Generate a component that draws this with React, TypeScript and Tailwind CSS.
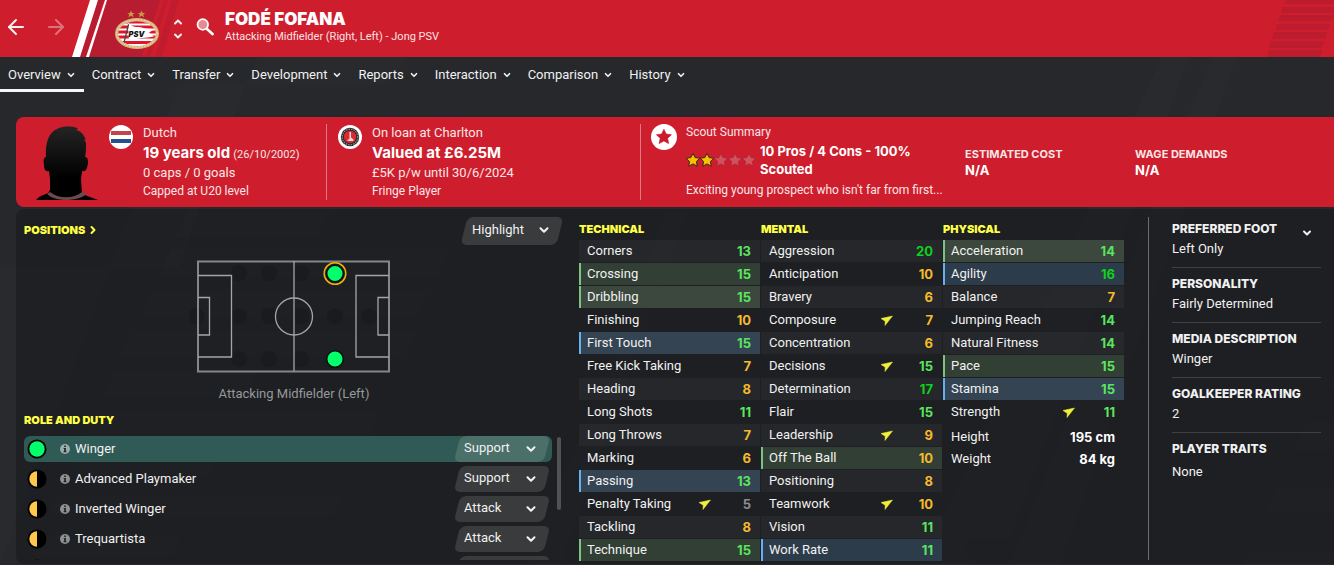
import { useState } from "react";
import { ArrowLeft, ArrowRight, ChevronDown, ChevronUp } from "lucide-react";

type Mark = "green" | "blue" | undefined;
type Attribute = { name: string; value: number; mark?: Mark; rising?: boolean };

const NAV = ["Overview", "Contract", "Transfer", "Development", "Reports", "Interaction", "Comparison", "History"];

const TECHNICAL: Attribute[] = [
  { name: "Corners", value: 13 },
  { name: "Crossing", value: 15, mark: "green" },
  { name: "Dribbling", value: 15, mark: "green" },
  { name: "Finishing", value: 10 },
  { name: "First Touch", value: 15, mark: "blue" },
  { name: "Free Kick Taking", value: 7 },
  { name: "Heading", value: 8 },
  { name: "Long Shots", value: 11 },
  { name: "Long Throws", value: 7 },
  { name: "Marking", value: 6 },
  { name: "Passing", value: 13, mark: "blue" },
  { name: "Penalty Taking", value: 5, rising: true },
  { name: "Tackling", value: 8 },
  { name: "Technique", value: 15, mark: "green" },
];

const MENTAL: Attribute[] = [
  { name: "Aggression", value: 20 },
  { name: "Anticipation", value: 10 },
  { name: "Bravery", value: 6 },
  { name: "Composure", value: 7, rising: true },
  { name: "Concentration", value: 6 },
  { name: "Decisions", value: 15, rising: true },
  { name: "Determination", value: 17 },
  { name: "Flair", value: 15 },
  { name: "Leadership", value: 9, rising: true },
  { name: "Off The Ball", value: 10, mark: "green" },
  { name: "Positioning", value: 8 },
  { name: "Teamwork", value: 10, rising: true },
  { name: "Vision", value: 11 },
  { name: "Work Rate", value: 11, mark: "blue" },
];

const PHYSICAL: Attribute[] = [
  { name: "Acceleration", value: 14, mark: "green" },
  { name: "Agility", value: 16, mark: "blue" },
  { name: "Balance", value: 7 },
  { name: "Jumping Reach", value: 14 },
  { name: "Natural Fitness", value: 14 },
  { name: "Pace", value: 15, mark: "green" },
  { name: "Stamina", value: 15, mark: "blue" },
  { name: "Strength", value: 11, rising: true },
];

const ROLES = [
  { name: "Winger", duty: "Support", full: true },
  { name: "Advanced Playmaker", duty: "Support", full: false },
  { name: "Inverted Winger", duty: "Attack", full: false },
  { name: "Trequartista", duty: "Attack", full: false },
];

const PROFILE = [
  { label: "Preferred Foot", value: "Left Only" },
  { label: "Personality", value: "Fairly Determined" },
  { label: "Media Description", value: "Winger" },
  { label: "Goalkeeper Rating", value: "2" },
];

function valueColor(value: number) {
  if (value >= 16) return "text-[#0fd11c]";
  if (value >= 11) return "text-[#5ae65f]";
  if (value >= 6) return "text-[#f7b92d]";
  return "text-[#8d8e90]";
}

function rowColor(index: number, mark: Mark) {
  const light = index % 2 === 0;
  if (mark === "green") return light ? "bg-[#3c483d]" : "bg-[#313f34]";
  if (mark === "blue") return light ? "bg-[#354453]" : "bg-[#2d3c4b]";
  return light ? "bg-white/4" : "";
}

function edge(mark: Mark) {
  if (mark === "green") return "shadow-[inset_2px_0_0_#7cc47f]";
  if (mark === "blue") return "shadow-[inset_2px_0_0_#64b0f2]";
  return "";
}

function Backdrop() {
  return (
    <svg className="absolute inset-0 h-full w-full" viewBox="0 0 1334 565" preserveAspectRatio="none" aria-hidden="true">
      <g fill="#fff" fillOpacity="0.012">
        <path d="M258 57H408L390 84H246L178 268H0V565H0L178 84H246Z" />
        <path d="M188 210H330L318 237H176ZM170 249H450L438 277H160ZM150 290H430L418 317H140ZM132 331H416L404 356H121ZM113 372H255L246 395H104ZM94 413H380L368 442H84ZM76 455H216L208 475H70ZM57 495H342L334 515H50ZM40 535H180L174 555H33Z" />
        <path d="M1162 57H1189L1010 538H962L972 565H920ZM1212 57H1237L1060 565H1010ZM668 210H688L560 565H530Z" />
        <path d="M1334 380L1322 387H1334ZM1307 422H1334V450H1295ZM1278 487H1334V513H1266ZM1248 552H1334V565H1243Z" />
      </g>
    </svg>
  );
}

function HeaderArt() {
  return (
    <>
      <svg className="absolute left-0 top-0 h-full w-[200px]" viewBox="0 0 200 57" aria-hidden="true">
        <path d="M108 0H160L142 57H88Z" fill="#b81c31" />
        <path d="M164 0H168L150 57H145ZM172 0H179L162 57H155Z" fill="#b81c31" fillOpacity=".65" />
        <path d="M98 0H104L86 57H80Z" fill="#b81c31" />
        <path d="M90 0H98L80 57H72ZM105 0H107L89 57H86Z" fill="#fff" />
      </svg>
      <svg className="absolute right-0 top-0 h-full w-[70px]" viewBox="0 0 70 57" aria-hidden="true">
        <path
          d="M22 0H70V4H20ZM19 7H70V13H17ZM16 15H70L67 21H14ZM13 24H66L64 30H11ZM10 32H63L61 39H8ZM7 41H60L58 48H5ZM5 50H58L56 57H3Z"
          fill="#bd1b2e"
        />
      </svg>
    </>
  );
}

function ClubBadge() {
  return (
    <svg className="mt-1 h-[42px] w-[46px]" viewBox="1 0 46 42" role="img" aria-label="PSV">
      <path d="M18 .5l1.100 2.400h2.700l-2.100 1.700.9 2.700L18 5.800l-2.600 1.500.9-2.700-2.100-1.700h2.700ZM28.500 .5l1.100 2.400h2.700l-2.100 1.700.9 2.700-2.600-1.500-2.600 1.500.9-2.700-2.100-1.700h2.700Z" fill="#c79a45" />
      <ellipse cx="24" cy="23.500" rx="22" ry="15.500" fill="#d5b878" />
      <ellipse cx="24" cy="23.500" rx="20.200" ry="13.700" fill="none" stroke="#eee0c4" strokeWidth="1" strokeDasharray="1.500 1.500" />
      <ellipse cx="24" cy="23.500" rx="18.800" ry="12.300" fill="#fff" />
      <clipPath id="badge"><ellipse cx="24" cy="23.500" rx="18.800" ry="12.300" /></clipPath>
      <g clipPath="url(#badge)" fill="#e0142b">
        <path d="M5 10.500h38v3H5ZM5 15.500h38v3H5ZM5 20.500h38v3H5ZM5 25.500h38v3H5ZM5 31h38v3H5Z" />
        <path d="M15 13q5 4.500 9 4t8 1.500l9 1-5 3 5 4q-7 1-12 1.500t-13 3Z" fill="#fff" />
        <path d="M15 14l1.200.5-4.500 18-1.200-.5Z" fill="#444" />
      </g>
      <text x="15.500" y="26.500" fontSize="7.500" fontWeight="900" fontStyle="italic" fontFamily="Inter, sans-serif" fill="#111">PSV</text>
    </svg>
  );
}

function Portrait() {
  return (
    <svg className="h-[74px] w-16 shrink-0" viewBox="0 0 64 74" role="img" aria-label="Player portrait">
      <defs>
        <linearGradient id="skin" x1="0" y1="0" x2="0" y2="1">
          <stop offset="0" stopColor="#242424" />
          <stop offset=".7" stopColor="#000" />
        </linearGradient>
      </defs>
      <path
        d="M10 31C9 16 13 6 22 2.500C28 0 35 0 41 2L42 3L40 4C45 5 48 9 50 14L48 13L50 17C50 22 50 27 49 31C52 31 52 34 52 37C51 43 50 46 46 45L45 53L46 68L62 74H0C3 70 8 69 12 67L14 64L14 53L13 45C9 46 8 43 8 38C7 34 8 31 10 31Z"
        fill="url(#skin)"
      />
      <path d="M11 68L14 66C22 73 38 73 46 66L51 68L46 71C37 75 23 75 15 71Z" fill="#6e4a4c" />
    </svg>
  );
}

function FlagIcon() {
  return (
    <svg className="size-6 shrink-0" viewBox="0 0 24 24" role="img" aria-label="Netherlands">
      <circle cx="12" cy="12" r="12" fill="#fff" />
      <path d="M2 6h20v4H2Z" fill="#c2454d" />
      <path d="M2 14h20v4H2Z" fill="#25508f" />
    </svg>
  );
}

function CharltonIcon() {
  return (
    <svg className="size-6 shrink-0" viewBox="0 0 24 24" role="img" aria-label="Charlton">
      <circle cx="12" cy="12" r="12" fill="#fff" />
      <circle cx="12" cy="12" r="9.200" fill="#2a2a2a" />
      <circle cx="12" cy="12" r="7.800" fill="none" stroke="#8d8d8d" strokeWidth="1.200" strokeDasharray="1.500 1" />
      <circle cx="12" cy="12" r="6.200" fill="#e02632" />
      <path d="M11.500 7h1.500v5.500l2.500 2V16h-5l-1.500-1 2.500-1Z" fill="#f6dada" />
    </svg>
  );
}

const STAR = "M7 .3l2.100 4.300 4.700.6-3.400 3.300.9 4.700L7 10.900 2.700 13.200l.9-4.700L.2 5.200l4.700-.6Z";

function Stars() {
  return (
    <svg className="h-3.5 w-[70px] shrink-0" viewBox="0 0 70 14" role="img" aria-label="2 out of 5 stars">
      {[0, 1, 2, 3, 4].map((i) => (
        <path
          key={i}
          d={STAR}
          transform={`translate(${i * 14} 0)`}
          fill={i < 2 ? "#f6c100" : "#d4505c"}
          stroke={i < 2 ? "#3a2a1a" : "#b0283a"}
          strokeWidth="1"
          strokeLinejoin="round"
        />
      ))}
    </svg>
  );
}

function Pitch() {
  const faint = [
    [43, 13], [73, 13], [105, 13], [0, 56], [43, 56], [73, 56], [105, 56],
    [139, 56], [173, 56], [43, 99], [73, 99], [105, 99],
  ];
  return (
    <svg className="h-[113px] w-[210px]" viewBox="-7 0 210 113" role="img" aria-label="Pitch positions">
      <g fill="#18191c" fillOpacity=".6">
        {faint.map(([x, y]) => <circle key={`${x}-${y}`} cx={x} cy={y} r="8" />)}
      </g>
      <g fill="none" stroke="#a4a5a6">
        <path d="M2 1.500H193V111.500H2Z" stroke="#858687" strokeWidth="2" />
        <path d="M98 1V111M2 15.500H35.500V97H2M2 37.500H13.500V75H2M193 15.500H160V97H193M193 37.500H182V75H193" strokeWidth="1.300" />
        <circle cx="98" cy="56.500" r="18.500" strokeWidth="1.300" />
      </g>
      <circle cx="139" cy="13.500" r="10.800" fill="#1d1e22" stroke="#ecb10e" strokeWidth="1.500" />
      <circle cx="139" cy="13.500" r="8.300" fill="#04ff6d" stroke="#06120b" strokeWidth="1.500" />
      <circle cx="139" cy="99" r="8.300" fill="#04ff6d" stroke="#06120b" strokeWidth="1.500" />
    </svg>
  );
}

function RoleDot({ full }: { full: boolean }) {
  return (
    <svg className="size-5 shrink-0" viewBox="0 0 20 20" aria-hidden="true">
      <circle cx="10" cy="10" r="9.500" fill="#000" />
      {full ? <circle cx="10" cy="10" r="7.700" fill="#04ff6d" /> : <path d="M10 2.300V17.700A7.700 7.700 0 0 1 10 2.300Z" fill="#ffc84d" />}
    </svg>
  );
}

function InfoIcon() {
  return (
    <svg className="size-2.5 shrink-0" viewBox="0 0 10 10" aria-hidden="true">
      <circle cx="5" cy="5" r="5" fill="#fff" fillOpacity=".5" />
      <path d="M4.200 1.500h1.700v1.400H4.200ZM3.700 4h2.200v3.300h.6v1h-3v-1h.7V5h-.5Z" fill="#222" />
    </svg>
  );
}

function AttributeTable({ title, rows }: { title: string; rows: Attribute[] }) {
  return (
    <table className="w-full table-fixed border-separate border-spacing-0 text-[13px] leading-5">
      <caption className="pt-3 pb-[3px] text-left font-['Inter'] text-[11px] leading-4 font-black text-[#ffff45] uppercase">
        {title}
      </caption>
      <tbody>
        {rows.map((row, i) => (
          <tr key={row.name} className="h-[23px]">
            <th
              scope="row"
              className={`w-[116px] border-b border-transparent bg-clip-padding py-0 pl-2 text-left font-normal whitespace-nowrap ${rowColor(i, row.mark)} ${edge(row.mark)}`}
            >
              {row.name}
            </th>
            <td className={`border-b border-transparent bg-clip-padding p-0 ${rowColor(i, row.mark)}`}>
              <div className="flex items-center justify-between pr-[9px]">
                <svg className="ml-1 size-3" viewBox="0 0 12 12" aria-hidden="true">
                  {row.rising && <path d="M0 4.500L11.500 2L4 11.500L4.200 7.300Z" fill="#f2ef3c" stroke="#f2ef3c" strokeWidth=".5" />}
                </svg>
                <span className={`font-['Inter'] font-bold ${valueColor(row.value)}`}>{row.value}</span>
              </div>
            </td>
          </tr>
        ))}
      </tbody>
    </table>
  );
}

function RoleRow({ role, active }: { role: (typeof ROLES)[number]; active: boolean }) {
  const [duty, setDuty] = useState(role.duty);
  return (
    <li className={`flex h-[26px] shrink-0 items-center rounded-md pl-[3px] ${active ? "bg-[#2f5a56]" : ""}`}>
      <RoleDot full={role.full} />
      <span className="ml-[13px] flex flex-1 items-center gap-[5px]">
        <InfoIcon />
        {role.name}
      </span>
      <div className="relative mr-0.5 h-[26px] w-24">
        <div className={`absolute inset-x-[3px] inset-y-0 -skew-x-[14deg] rounded-md ${active ? "bg-[#4b6f69]" : "bg-[#3a3b3d]"}`} />
        <select
          aria-label={`${role.name} duty`}
          value={duty}
          onChange={(e) => setDuty(e.target.value)}
          className="relative h-6 w-full appearance-none bg-transparent pr-6 pl-2.5 text-[13px] text-[#f1f1f1]"
        >
          <option>Support</option>
          <option>Attack</option>
        </select>
        <ChevronDown className="pointer-events-none absolute top-1.5 right-3 size-3.5" strokeWidth={3.5} aria-hidden="true" />
      </div>
    </li>
  );
}

export default function App() {
  return (
    <div className="relative flex min-h-screen flex-col overflow-hidden bg-[#26282c] font-['Roboto',sans-serif] text-[13px] leading-5 text-[#f1f1f1]">
      <Backdrop />

      <header className="relative flex h-[57px] items-center bg-[#ce1d2c]">
        <HeaderArt />
        <div className="relative flex w-[114px] items-center gap-4 pb-1 pl-1">
          <button type="button" aria-label="Back"><ArrowLeft className="size-6" strokeWidth={2} /></button>
          <button type="button" aria-label="Forward" className="opacity-40"><ArrowRight className="size-6" strokeWidth={2} /></button>
        </div>
        <div className="relative flex items-center">
          <ClubBadge />
          <div className="ml-3 flex flex-col gap-0.5">
            <button type="button" aria-label="Previous player"><ChevronUp className="size-3" strokeWidth={4} /></button>
            <button type="button" aria-label="Next player"><ChevronDown className="size-3" strokeWidth={4} /></button>
          </div>
          <button type="button" aria-label="Search" className="mb-1 ml-3">
            <svg className="size-[18px]" viewBox="0 0 18 18" aria-hidden="true">
              <circle cx="6.800" cy="6.500" r="5.300" fill="#e88a94" stroke="#fff" strokeWidth="1.700" />
              <path d="M11 11l5.500 5" stroke="#fff" strokeWidth="2.700" strokeLinecap="round" />
            </svg>
          </button>
          <div className="mb-1 ml-[11px]">
            <h1 className="font-['Inter'] text-[17px] leading-5 font-black text-white">FODÉ FOFANA</h1>
            <p className="text-[11px] leading-4 text-[#fbe3e4]">Attacking Midfielder (Right, Left) - Jong PSV</p>
          </div>
        </div>
      </header>

      <nav className="relative mb-[25px] flex h-[35px]" aria-label="Player sections">
        {NAV.map((item, i) => (
          <a
            key={item}
            href={`#${item.toLowerCase()}`}
            className={`flex items-center gap-[5px] border-b-[3px] px-2 pt-1 ${i === 0 ? "border-[#f6f6f6]" : "border-transparent"}`}
          >
            {item}
            <ChevronDown className="size-2.5" strokeWidth={4} aria-hidden="true" />
          </a>
        ))}
      </nav>

      <section
        aria-label="Player summary"
        className="relative ml-4 grid h-[90px] grid-cols-[311fr_314fr_324fr_170fr_199fr] rounded-l-lg bg-[#ce1d2c] text-[#fbe6e7]"
      >
        <div className="my-[7px] flex border-r border-[#e07a82] pl-5">
          <div className="mt-0.5"><Portrait /></div>
          <div className="mt-px mr-2.5 ml-[9px]"><FlagIcon /></div>
          <div className="-mt-px">
            <p>Dutch</p>
            <p className="h-5">
              <b className="font-['Inter'] text-[15px] text-white">19 years old</b> <span className="text-[11px]">(26/10/2002)</span>
            </p>
            <p>0 caps / 0 goals</p>
            <p className="text-xs leading-4">Capped at U20 level</p>
          </div>
        </div>
        <div className="my-[7px] flex border-r border-[#e07a82] pl-[11px]">
          <div className="mt-px mr-2.5"><CharltonIcon /></div>
          <div className="-mt-px">
            <p>On loan at Charlton</p>
            <p className="font-['Inter'] text-[15px] font-bold text-white">Valued at £6.25M</p>
            <p>£5K p/w until 30/6/2024</p>
            <p className="text-xs leading-4">Fringe Player</p>
          </div>
        </div>
        <div className="my-[7px] flex pl-2.5">
          <svg className="size-[26px] shrink-0" viewBox="0 0 26 26" aria-hidden="true">
            <circle cx="13" cy="13" r="13" fill="#fff" />
            <path d={STAR} transform="translate(5.200 5) scale(1.100)" fill="#cb1c2c" stroke="#cb1c2c" strokeWidth=".6" strokeLinejoin="round" />
          </svg>
          <div className="ml-[9px]">
            <p className="text-xs leading-4">Scout Summary</p>
            <div className="flex items-center gap-1 pt-0.5">
              <Stars />
              <p className="w-[160px] font-['Inter'] text-[13px] leading-[18px] font-bold text-white">10 Pros / 4 Cons - 100% Scouted</p>
            </div>
            <p className="pt-1 text-xs leading-4">Exciting young prospect who isn't far from first...</p>
          </div>
        </div>
        <div className="self-center">
          <p className="font-['Inter'] text-[11px] leading-4 font-bold uppercase">Estimated Cost</p>
          <p className="font-['Inter'] text-[13px] leading-4 font-bold text-white">N/A</p>
        </div>
        <div className="self-center">
          <p className="font-['Inter'] text-[11px] leading-4 font-bold uppercase">Wage Demands</p>
          <p className="font-['Inter'] text-[13px] leading-4 font-bold text-white">N/A</p>
        </div>
      </section>

      <main className="relative mt-0.5 mb-px ml-4 flex flex-1 rounded-l-lg bg-black/22">
        <section className="flex min-w-0 flex-1 flex-col pr-[15px] pl-2" aria-label="Positions and roles">
          <div className="-mr-1 flex items-start justify-between pt-2">
            <h2 className="mt-[5px] font-['Inter'] text-[11px] leading-4 font-black text-[#ffff45]">
              <a href="#positions" className="flex items-center gap-0.5">
                POSITIONS
                <ChevronDown className="size-3 -rotate-90" strokeWidth={4} aria-hidden="true" />
              </a>
            </h2>
            <button type="button" className="relative mr-[5px] h-7 w-[102px]">
              <span className="absolute inset-x-[3px] inset-y-0 -skew-x-[14deg] rounded-md bg-[#3a3b3d]" />
              <span className="relative flex items-center justify-between pr-3 pb-0.5 pl-[11px]">
                Highlight
                <ChevronDown className="size-3.5" strokeWidth={3.5} aria-hidden="true" />
              </span>
            </button>
          </div>
          <figure className="flex flex-col items-center pt-[15px]">
            <Pitch />
            <figcaption className="pt-[11px] text-[#97989a]">Attacking Midfielder (Left)</figcaption>
          </figure>
          <h2 className="mt-2 font-['Inter'] text-[11px] leading-4 font-black text-[#ffff45]">ROLE AND DUTY</h2>
          <div className="mt-2 mb-1 flex h-0 min-h-[124px] grow overflow-hidden pr-[3px]">
            <ul className="flex flex-1 flex-col gap-1">
              {ROLES.map((role, i) => <RoleRow key={role.name} role={role} active={i === 0} />)}
              <li className="flex h-[26px] shrink-0 items-center justify-between pr-[5px] pl-[3px]" aria-hidden="true">
                <RoleDot full={false} />
                <span className="h-full w-[90px] -skew-x-[14deg] rounded-md bg-[#3a3b3d]" />
              </li>
            </ul>
            <div className="mt-px ml-[5px] h-[73px] w-1 rounded-full bg-[#515254]" />
          </div>
        </section>

        <section className="grid w-[545px] shrink-0 grid-cols-3 items-start gap-px" aria-label="Attributes">
          <AttributeTable title="Technical" rows={TECHNICAL} />
          <AttributeTable title="Mental" rows={MENTAL} />
          <div>
            <AttributeTable title="Physical" rows={PHYSICAL} />
            <dl className="mt-[3px] grid grid-cols-2 gap-y-0.5 px-[9px] pl-2">
              <dt>Height</dt>
              <dd className="text-right font-['Inter'] font-bold text-white">195 cm</dd>
              <dt>Weight</dt>
              <dd className="text-right font-['Inter'] font-bold text-white">84 kg</dd>
            </dl>
          </div>
        </section>

        <aside className="relative mt-2 mr-[13px] mb-1 ml-6 w-[173px] shrink-0 border-l border-[#6c6d70] pl-[23px]" aria-label="Profile">
          <button type="button" aria-label="More details" className="absolute top-2.5 right-2">
            <ChevronDown className="size-3" strokeWidth={4} />
          </button>
          <dl className="pt-1">
            {PROFILE.map((item) => (
              <div key={item.label} className="mb-2 h-[47px] border-b border-[#3f4043]">
                <dt className="font-['Inter'] text-xs leading-4 font-extrabold whitespace-nowrap uppercase">{item.label}</dt>
                <dd className="mt-0.5">{item.value}</dd>
              </div>
            ))}
            <div>
              <dt className="font-['Inter'] text-xs leading-4 font-extrabold uppercase">Player Traits</dt>
              <dd className="mt-[5px]">None</dd>
            </div>
          </dl>
        </aside>
      </main>
    </div>
  );
}
